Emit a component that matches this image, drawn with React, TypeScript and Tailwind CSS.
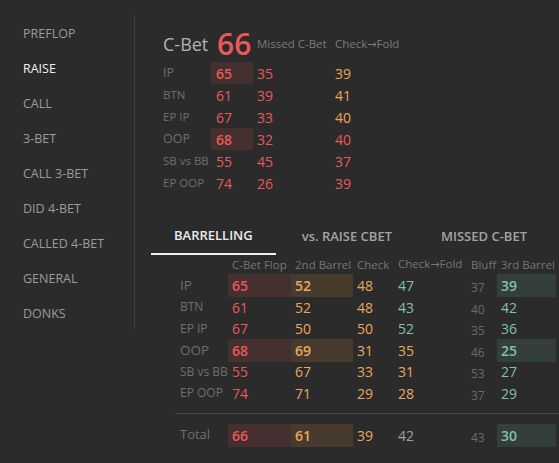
const FONT = "font-['Open_Sans',_'Noto_Sans',_sans-serif]";

const NAV = ["PREFLOP", "RAISE", "CALL", "3-BET", "CALL 3-BET", "DID 4-BET", "CALLED 4-BET", "GENERAL", "DONKS"];

const RED = "text-[#e85a5a]";
const ORANGE = "text-[#eaa85c]";
const TEAL = "text-[#80c0ad]";

type TopRow = { label: string; big: boolean; cbet: string; hl: boolean; missed: string; cf: string; cfColor: string };

const topRows: TopRow[] = [
  { label: "IP", big: true, cbet: "65", hl: true, missed: "35", cf: "39", cfColor: ORANGE },
  { label: "BTN", big: false, cbet: "61", hl: false, missed: "39", cf: "41", cfColor: ORANGE },
  { label: "EP IP", big: false, cbet: "67", hl: false, missed: "33", cf: "40", cfColor: ORANGE },
  { label: "OOP", big: true, cbet: "68", hl: true, missed: "32", cf: "40", cfColor: RED },
  { label: "SB vs BB", big: false, cbet: "55", hl: false, missed: "45", cf: "37", cfColor: RED },
  { label: "EP OOP", big: false, cbet: "74", hl: false, missed: "26", cf: "39", cfColor: RED },
];

type BRow = { label: string; big: boolean; hl: boolean; v: string[] };

const barrelRows: BRow[] = [
  { label: "IP", big: true, hl: true, v: ["65", "52", "48", "47", "37", "39"] },
  { label: "BTN", big: false, hl: false, v: ["61", "52", "48", "43", "40", "42"] },
  { label: "EP IP", big: false, hl: false, v: ["67", "50", "50", "52", "35", "36"] },
  { label: "OOP", big: true, hl: true, v: ["68", "69", "31", "35", "46", "25"] },
  { label: "SB vs BB", big: false, hl: false, v: ["55", "67", "33", "31", "53", "27"] },
  { label: "EP OOP", big: false, hl: false, v: ["74", "71", "29", "28", "37", "29"] },
];

const COLS = "grid grid-cols-[53px_63px_62px_44px_70px_30px_59px] whitespace-nowrap";

// arrow glyph isn't in Open Sans, borrow it from DejaVu
function CheckFold() {
  return (
    <>
      Check<span className="font-['DejaVu_Sans',_sans-serif] text-[11px]">→</span>Fold
    </>
  );
}

function BarrelRow({ row, total }: { row: BRow; total?: boolean }) {
  const [a, b, c, d, e, f] = row.v;
  const w = row.hl ? "font-semibold" : "";
  return (
    <div className={`${COLS} h-[21.6px] items-center text-[14px]`}>
      <div className={`pl-[5px] text-[#6f6f6f] ${row.big ? "text-[13.5px]" : total ? "text-[13px]" : "text-[12px]"}`}>{row.label}</div>
      <div className={`h-full flex items-center pl-[4px] ${RED} ${w} ${row.hl ? "bg-[#45302f]" : ""}`}>{a}</div>
      <div className={`h-full flex items-center pl-[4px] ${ORANGE} ${w} ${row.hl ? "bg-[#473b2e]" : ""}`}>{b}</div>
      <div className={`pl-[4px] ${ORANGE}`}>{c}</div>
      <div className={`pl-[1px] ${total ? "text-[#a0a0a0]" : d === "35" || d === "31" || d === "28" ? ORANGE : TEAL}`}>{d}</div>
      <div className="pl-[4px] pt-[5px] text-[12px] text-[#6a6a6a]">{e}</div>
      <div className={`h-full flex items-center pl-[4px] ${TEAL} ${w} ${row.hl ? "bg-[#343f3a]" : ""}`}>{f}</div>
    </div>
  );
}

export default function App() {
  return (
    <div className={`${FONT} w-[559px] h-[463px] bg-[#2b2b2b] flex overflow-hidden whitespace-nowrap`}>
      <div className="w-[135px] shrink-0 pt-[15px]">
        <div className="h-[315px] border-r border-[#3d3d3d] pt-[2px]">
          {NAV.map((n) => (
            <div key={n} className={`h-[35px] flex items-center pl-[23px] text-[12.5px] ${n === "RAISE" ? "text-[#f2f2f2]" : "text-[#9b9b9b]"}`}>
              {n}
            </div>
          ))}
        </div>
      </div>

      <div className="flex-1 flex flex-col">
        <div className="pl-[28px] pt-[26px]">
          <div className="grid grid-cols-[48px_42px_82px_auto] items-center h-[36px]">
            <div className="col-span-2 flex items-center">
              <span className="w-[54px] text-[18px] text-[#b3b3b3] leading-none">C-Bet</span>
              <span className={`text-[30px] font-semibold leading-none ${RED}`}>66</span>
            </div>
            <div className="pl-[4px] text-[11.5px] text-[#7a7a7a]">Missed C-Bet</div>
            <div className="text-[11.5px] text-[#7a7a7a]">
              <CheckFold />
            </div>
          </div>
          {topRows.map((r) => (
            <div key={r.label} className="grid grid-cols-[48px_42px_82px_auto] h-[22px] items-center text-[14px]">
              <div className={`text-[#6f6f6f] ${r.big ? "text-[12.5px]" : "text-[11.5px]"}`}>{r.label}</div>
              <div className={`h-full flex items-center pl-[5px] ${RED} ${r.hl ? "bg-[#45302f] font-semibold" : ""}`}>{r.cbet}</div>
              <div className={`pl-[4px] ${RED}`}>{r.missed}</div>
              <div className={r.cfColor}>{r.cf}</div>
            </div>
          ))}
        </div>

        <div className="flex pl-[16px] mt-[24px]">
          {["BARRELLING", "vs. RAISE CBET", "MISSED C-BET"].map((t, i) => (
            <div
              key={t}
              className={`px-[23px] h-[37px] flex items-center text-[13px] font-semibold ${i === 0 ? "text-[#ececec] border-b-2 border-[#f0f0f0]" : "text-[#a3a3a3]"} ${i > 0 ? "ml-[3px]" : ""}`}
            >
              {t}
            </div>
          ))}
        </div>

        <div className="pl-[40px]">
          <div className={`${COLS} h-[19px] items-center text-[11.5px] text-[#767676]`}>
            <div />
            <div className="pl-[4px]">C-Bet Flop</div>
            <div className="pl-[4px]">2nd Barrel</div>
            <div className="pl-[4px]">Check</div>
            <div className="pl-[1px]">
              <CheckFold />
            </div>
            <div className="pl-[4px]">Bluff</div>
            <div className="pl-[4px]">3rd Barrel</div>
          </div>
          {barrelRows.map((r) => (
            <BarrelRow key={r.label} row={r} />
          ))}
          <div className="mt-[9px] border-t border-[#444444] mb-[10px]" />
          <BarrelRow row={{ label: "Total", big: false, hl: true, v: ["66", "61", "39", "42", "43", "30"] }} total />
        </div>
      </div>
    </div>
  );
}
